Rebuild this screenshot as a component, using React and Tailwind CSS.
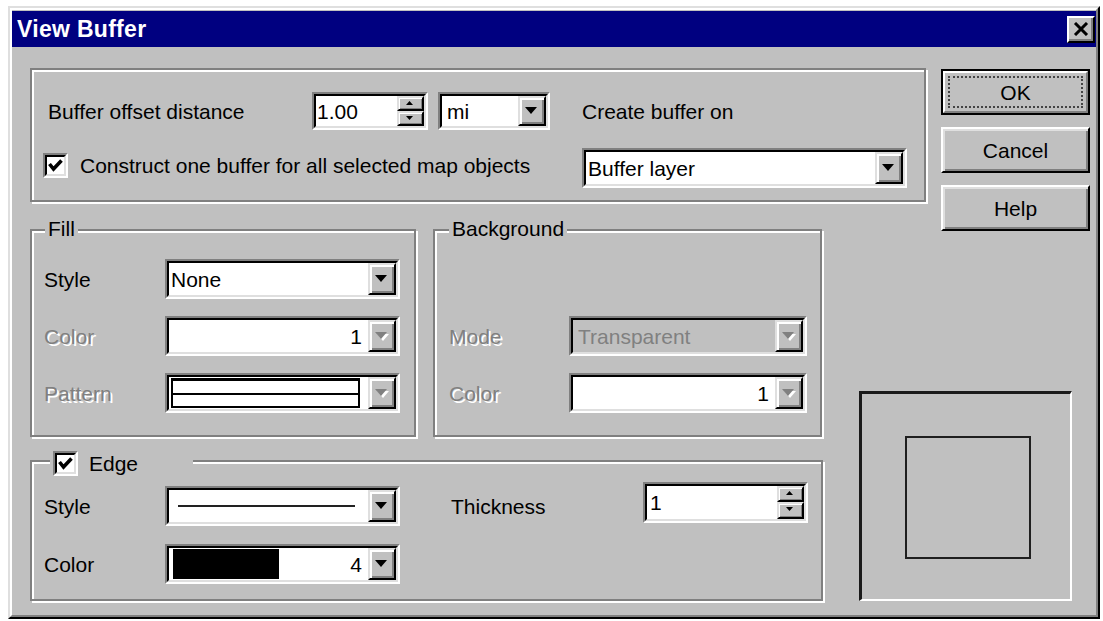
import React from 'react';

const FONT = "font-['Liberation_Sans',Arial,sans-serif]";

// Small triangle glyph used on combo and spin buttons
function Triangle({ w = 12, h = 7, up = false, disabled = false }) {
  const pts = up ? `0,${h} ${w},${h} ${w / 2},0` : `0,0 ${w},0 ${w / 2},${h}`;
  return (
    <svg width={w + 2} height={h + 2} viewBox={`0 0 ${w + 2} ${h + 2}`}>
      {disabled && <polygon points={pts} fill="#fff" transform="translate(2 2)" />}
      <polygon points={pts} fill={disabled ? '#808080' : '#000'} />
    </svg>
  );
}

// Recessed white field with the classic two-tone bevel
function Sunken({ className = '', bg = 'bg-white', children }) {
  return (
    <div className={`flex shrink-0 border-2 border-t-[#808080] border-l-[#808080] border-b-white border-r-white ${className}`}>
      <div className={`flex min-w-0 flex-1 items-stretch border-2 border-t-black border-l-black border-b-[#dfdfdf] border-r-[#dfdfdf] ${bg}`}>
        {children}
      </div>
    </div>
  );
}

function DropButton({ disabled }) {
  return (
    <div className="flex h-full w-[28px] shrink-0 items-center justify-center border-2 border-t-[#dfdfdf] border-l-[#dfdfdf] border-b-black border-r-black bg-[#c0c0c0] shadow-[inset_2px_2px_0_#fff,inset_-2px_-2px_0_#808080]">
      <Triangle disabled={disabled} />
    </div>
  );
}

function Combo({ className = '', bg = 'bg-white', disabled = false, contentClass = 'pl-[4px]', children }) {
  return (
    <Sunken className={className} bg={bg}>
      <div className={`flex min-w-0 flex-1 items-center ${contentClass}`}>{children}</div>
      <DropButton disabled={disabled} />
    </Sunken>
  );
}

function SpinHalf({ up }) {
  return (
    <div className="flex flex-1 items-center justify-center border-2 border-t-[#dfdfdf] border-l-[#dfdfdf] border-b-black border-r-black bg-[#c0c0c0] shadow-[inset_1px_1px_0_#fff,inset_-1px_-1px_0_#808080]">
      <Triangle w={7} h={4} up={up} />
    </div>
  );
}

function Spin({ className = '', pad = 'pl-[1px]', value }) {
  return (
    <Sunken className={className}>
      <div className={`flex flex-1 items-center ${pad}`}>{value}</div>
      <div className="flex w-[27px] shrink-0 flex-col">
        <SpinHalf up />
        <SpinHalf />
      </div>
    </Sunken>
  );
}

function Check() {
  return (
    <div className="h-[25px] w-[25px] shrink-0 border-2 border-t-[#808080] border-l-[#808080] border-b-white border-r-white">
      <div className="flex h-full w-full items-center justify-center border-2 border-t-black border-l-black border-b-[#dfdfdf] border-r-[#dfdfdf] bg-white">
        <svg width="15" height="13" viewBox="0 0 15 13">
          <path d="M1.5 5 L5.5 10 L13.5 1.5" stroke="#000" strokeWidth="3.6" fill="none" />
        </svg>
      </div>
    </div>
  );
}

// Etched group frame: grey outer line, white inner line
function Group({ className = '', children }) {
  return (
    <div className={`flex flex-col border-2 border-[#808080] shadow-[inset_2px_2px_0_#fff,2px_2px_0_#fff] ${className}`}>
      {children}
    </div>
  );
}

function Label({ disabled, className = '', children }) {
  return (
    <span
      className={`shrink-0 ${disabled ? 'text-[#808080] [text-shadow:2px_2px_0_#fff]' : 'text-black'} ${className}`}
    >
      {children}
    </span>
  );
}

function Button({ isDefault, children }) {
  if (isDefault) {
    return (
      <div className="h-[46px] w-[149px] border-2 border-black">
        <div className="flex h-full w-full items-center justify-center border-2 border-t-white border-l-white border-b-[#808080] border-r-[#808080] p-[3px]">
          <div className="flex h-full w-full items-center justify-center border-2 border-dotted border-[#444]">
            {children}
          </div>
        </div>
      </div>
    );
  }
  return (
    <div className="flex h-[46px] w-[149px] items-center justify-center border-2 border-t-white border-l-white border-b-black border-r-black shadow-[inset_2px_2px_0_#dfdfdf,inset_-2px_-2px_0_#808080]">
      {children}
    </div>
  );
}

function CloseButton() {
  return (
    <div className="flex h-[27px] w-[28px] items-center justify-center border-2 border-t-white border-l-white border-b-black border-r-black bg-[#c0c0c0] shadow-[inset_-2px_-2px_0_#808080]">
      <svg width="16" height="14" viewBox="0 0 16 14">
        <path d="M2 1 L14 13 M14 1 L2 13" stroke="#000" strokeWidth="3" />
      </svg>
    </div>
  );
}

export default function App() {
  return (
    <div className={`h-[621px] w-[1103px] overflow-hidden bg-white pl-[8px] pt-[6px] ${FONT} text-[21px] leading-none text-black`}>
      <div className="h-[613px] w-[1092px] border-2 border-t-[#dfdfdf] border-l-[#dfdfdf] border-b-black border-r-black bg-[#c0c0c0]">
        <div className="flex h-full flex-col border-2 border-t-white border-l-white border-b-[#808080] border-r-[#808080] pt-[1px]">
          {/* Title bar */}
          <div className="flex h-[36px] shrink-0 items-center justify-between bg-[#000080] pl-[5px] pr-[1px]">
            <span className="text-[23px] font-bold tracking-[0.3px] text-white">View Buffer</span>
            <CloseButton />
          </div>

          {/* Dialog body */}
          <div className="grid grid-cols-[793px_103px_164px] pl-[18px] pt-[21px]">
            {/* Buffer options */}
            <Group className="col-span-2 row-start-1 h-[134px] pl-[11px] pt-[22px]">
              <div className="flex h-[38px] items-center">
                <Label className="ml-[5px] w-[264px]">Buffer offset distance</Label>
                <Spin className="h-[38px] w-[116px]" value="1.00" />
                <Combo className="ml-[10px] h-[38px] w-[112px]" contentClass="pl-[5px]">mi</Combo>
                <Label className="ml-[32px]">Create buffer on</Label>
              </div>
              <div className="mt-[18px] flex h-[40px] items-center">
                <div className="-mt-[6px] flex w-[539px] items-center gap-[12px]">
                  <Check />
                  <span>Construct one buffer for all selected map objects</span>
                </div>
                <Combo className="h-[40px] w-[325px]" contentClass="pl-[2px]">Buffer layer</Combo>
              </div>
            </Group>

            {/* Command buttons */}
            <div className="col-start-3 row-span-2 row-start-1 mt-[1px] flex flex-col gap-[12px] self-start pl-[15px]">
              <Button isDefault>OK</Button>
              <Button>Cancel</Button>
              <Button>Help</Button>
            </div>

            {/* Fill and Background */}
            <div className="col-start-1 row-start-2 mt-[27px] flex gap-[17px]">
              <Group className="h-[208px] w-[386px] pl-[12px]">
                <div className="-mt-[14px] ml-[1px] w-fit bg-[#c0c0c0] px-[3px] leading-[24px]">Fill</div>
                <div className="mt-[18px] flex flex-col gap-[17px]">
                  <div className="flex items-center">
                    <Label className="w-[121px]">Style</Label>
                    <Combo className="h-[40px] w-[235px]" contentClass="pl-[2px]">None</Combo>
                  </div>
                  <div className="flex items-center">
                    <Label disabled className="w-[121px]">Color</Label>
                    <Combo disabled className="h-[40px] w-[235px]" contentClass="justify-end pr-[6px]">1</Combo>
                  </div>
                  <div className="flex items-center">
                    <Label disabled className="w-[121px]">Pattern</Label>
                    <Combo disabled className="h-[40px] w-[235px]" contentClass="pl-[2px]">
                      <div className="flex h-[30px] w-[189px] flex-col border-2 border-t-[3px] border-black bg-white">
                        <div className="flex-1" />
                        <div className="h-[2px] bg-black" />
                        <div className="flex-1" />
                      </div>
                    </Combo>
                  </div>
                </div>
              </Group>

              <Group className="h-[208px] w-[389px] pl-[14px]">
                <div className="-mt-[14px] w-fit bg-[#c0c0c0] px-[3px] leading-[24px]">Background</div>
                <div className="mt-[75px] flex flex-col gap-[17px]">
                  <div className="flex items-center">
                    <Label disabled className="w-[120px]">Mode</Label>
                    <Combo disabled bg="bg-[#c0c0c0]" className="h-[40px] w-[238px]" contentClass="pl-[5px] text-[#808080]">
                      Transparent
                    </Combo>
                  </div>
                  <div className="flex items-center">
                    <Label disabled className="w-[120px]">Color</Label>
                    <Combo disabled className="h-[40px] w-[238px]" contentClass="justify-end pr-[6px]">1</Combo>
                  </div>
                </div>
              </Group>
            </div>

            {/* Edge */}
            <Group className="col-start-1 row-start-3 mt-[23px] h-[141px] w-[793px] pl-[12px]">
              <div className="-mt-[12px] ml-[6px] flex h-[26px] w-[143px] items-center gap-[11px] bg-[#c0c0c0] px-[3px]">
                <Check />
                <span>Edge</span>
              </div>
              <div className="mt-[10px] flex h-[40px] items-center">
                <Label className="w-[121px]">Style</Label>
                <Combo className="h-[40px] w-[235px]" contentClass="pl-[9px]">
                  <div className="h-[2px] w-[177px] bg-[#222]" />
                </Combo>
                <Label className="ml-[51px] w-[192px]">Thickness</Label>
                <Spin className="-mt-[8px] h-[41px] w-[165px]" pad="pl-[3px]" value="1" />
              </div>
              <div className="mt-[18px] flex h-[40px] items-center">
                <Label className="w-[121px]">Color</Label>
                <Combo className="h-[40px] w-[235px]" contentClass="pl-[4px] pr-[6px]">
                  <div className="h-[30px] w-[106px] bg-black" />
                  <span className="ml-auto">4</span>
                </Combo>
              </div>
            </Group>

            {/* Buffer preview */}
            <div className="col-span-2 col-start-2 row-span-2 row-start-2 ml-[36px] h-[210px] w-[213px] self-end border-b-2 border-l-[3px] border-r-2 border-t-[3px] border-b-white border-l-[#1a1a1a] border-r-white border-t-[#1a1a1a] pl-[43px] pt-[42px]">
              <div className="h-[123px] w-[126px] border-2 border-[#1f1f1f]" />
            </div>
          </div>
        </div>
      </div>
    </div>
  );
}
